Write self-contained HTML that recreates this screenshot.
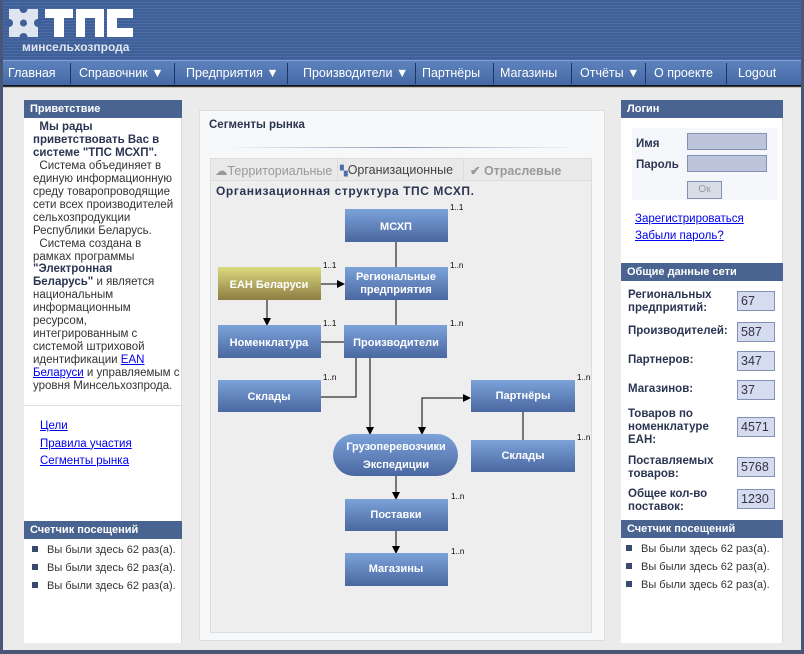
<!DOCTYPE html>
<html><head><meta charset="utf-8"><style>
*{margin:0;padding:0;box-sizing:border-box}
body{width:804px;height:654px;overflow:hidden;position:relative;background:#ebebeb;font-family:"Liberation Sans",sans-serif;font-size:11px;color:#333}
.a{position:absolute;white-space:nowrap}
#hdr{left:0;top:0;width:804px;height:60px;background:repeating-linear-gradient(#3f5f98 0 2px,#4d6ca5 2px 3px)}
#nav{left:0;top:60px;width:804px;height:25px;background:linear-gradient(#5d82bd,#4569a6);border-top:1px solid #7e9dd0;box-shadow:0 2px 1px #111}
#nav span{position:absolute;top:5px;color:#fff;font-size:12.5px}
.sep{position:absolute;top:2px;width:1px;height:21px;background:#1d3463}
.dd{font-size:9px}
.fr{background:#4a5675}
.col{background:#fff}
.hd{background:#4a6491;color:#fff;font-weight:bold;font-size:11px;padding:3px 6px;height:18px}
a{color:#0000ee}
.lbl{font-weight:bold;color:#2b3552;font-size:11.5px;line-height:13px}
.val{width:38px;height:20px;background:#d5dcef;border:1px solid #8392b4;color:#334;font-size:12.5px;padding:2px 0 0 3px}
.li{font-size:11px;color:#333}
.li:before{content:"";display:inline-block;width:6px;height:6px;background:#3a4a6e;margin:0 9px 1px 4px}
</style></head><body>
<div class="a" id="hdr"></div>
<svg class="a" style="left:0;top:0" width="140" height="60">
<rect x="9" y="9" width="29" height="28" fill="#dfe5ee"/>
<circle cx="23.5" cy="23" r="3.5" fill="#3f5f98"/>
<circle cx="9" cy="23" r="4" fill="#3f5f98"/><circle cx="38" cy="23" r="4" fill="#3f5f98"/>
<circle cx="23.5" cy="9" r="4" fill="#3f5f98"/><circle cx="23.5" cy="37" r="4" fill="#3f5f98"/>
<path d="M45 9h28v9h-9v19h-10v-19h-9z M76 9h28v28h-9v-19h-10v19h-9z M107 9h26v9h-16v10h16v9h-26z" fill="#fff"/>
</svg>
<div class="a" style="left:22px;top:40px;color:#dfe5ee;font-weight:bold;font-size:12px">минсельхозпрода</div>
<div class="a" id="nav">
<span style="left:8px">Главная</span><div class="sep" style="left:70px"></div>
<span style="left:79px">Справочник <span class="dd" style="position:static">▼</span></span><div class="sep" style="left:174px"></div>
<span style="left:186px">Предприятия <span class="dd" style="position:static">▼</span></span><div class="sep" style="left:287px"></div>
<span style="left:303px">Производители <span class="dd" style="position:static">▼</span></span><div class="sep" style="left:415px"></div>
<span style="left:422px">Партнёры</span><div class="sep" style="left:493px"></div>
<span style="left:500px">Магазины</span><div class="sep" style="left:571px"></div>
<span style="left:580px">Отчёты <span class="dd" style="position:static">▼</span></span><div class="sep" style="left:645px"></div>
<span style="left:654px">О проекте</span><div class="sep" style="left:726px"></div>
<span style="left:738px">Logout</span>
</div>
<div class="a fr" style="left:0;top:0;width:3px;height:654px"></div>
<div class="a fr" style="right:0;top:0;width:3px;height:654px"></div>
<div class="a fr" style="left:0;bottom:0;width:804px;height:4px"></div>

<div class="a col" style="left:24px;top:100px;width:158px;height:543px;border-right:1px solid #ddd"></div>
<div class="a hd" style="left:24px;top:100px;width:158px">Приветствие</div>
<div class="a" style="left:33px;top:121px;font-size:11.5px;line-height:12.95px;color:#333">
<b style="color:#2b3552">&nbsp;&nbsp;Мы рады<br>приветствовать Вас в<br>системе "ТПС МСХП".</b><br>
&nbsp;&nbsp;Система объединяет в<br>единую информационную<br>среду товаропроводящие<br>сети всех производителей<br>сельхозпродукции<br>Республики Беларусь.<br>
&nbsp;&nbsp;Система создана в<br>рамках программы<br><b style="color:#2b3552">"Электронная<br>Беларусь"</b> и является<br>национальным<br>информационным<br>ресурсом,<br>интегрированным с<br>системой штриховой<br>идентификации <a href="#">EAN</a><br><a href="#">Беларуси</a> и управляемым с<br>уровня Минсельхозпрода.</div>
<div class="a" style="left:24px;top:405px;width:158px;height:1px;background:#ddd"></div>
<div class="a" style="left:40px;top:418px;line-height:17.5px;font-size:11.5px"><a href="#">Цели</a><br><a href="#">Правила участия</a><br><a href="#">Сегменты рынка</a></div>
<div class="a hd" style="left:24px;top:521px;width:158px">Счетчик посещений</div>
<div class="a" style="left:28px;top:541px;line-height:18px"><div class="li">Вы были здесь 62 раз(а).</div><div class="li">Вы были здесь 62 раз(а).</div><div class="li">Вы были здесь 62 раз(а).</div></div>

<div class="a" style="left:199px;top:110px;width:406px;height:531px;background:#f7f8fa;border:1px solid #ddd"></div>
<div class="a" style="left:209px;top:119px;font-weight:bold;font-size:11.5px;color:#2b3552">Сегменты рынка</div>
<div class="a" style="left:225px;top:147px;width:355px;height:1px;background:linear-gradient(90deg,#f7f8fa,#8d9ab8,#f7f8fa)"></div>
<div class="a" style="left:210px;top:158px;width:382px;height:475px;background:#eeeeee;border:1px solid #ddd"></div>
<div class="a" style="left:211px;top:159px;width:380px;height:22px;background:#e9e9e9;border-bottom:1px solid #ddd"></div>
<div class="a" style="left:337px;top:159px;width:1px;height:22px;background:#ddd"></div>
<div class="a" style="left:463px;top:159px;width:1px;height:22px;background:#ddd"></div>
<div class="a" style="left:215px;top:163px;font-size:12.5px;color:#999">☁Территориальные</div>
<div class="a" style="left:340px;top:163px;font-size:12.5px;color:#444"><span style="color:#4a6fb0;font-size:10px">▚</span>Организационные</div>
<div class="a" style="left:470px;top:163px;font-size:12.5px;color:#999;font-weight:bold">✔ Отраслевые</div>
<div class="a" style="left:216px;top:184px;font-weight:bold;font-size:12px;color:#2b3552;letter-spacing:0.6px">Организационная структура ТПС МСХП.</div>

<svg class="a" style="left:0;top:0" width="804" height="654" font-family="Liberation Sans,sans-serif">
<defs>
<linearGradient id="b" x1="0" y1="0" x2="0" y2="1"><stop offset="0" stop-color="#7ca2da"/><stop offset="1" stop-color="#4a67a0"/></linearGradient>
<linearGradient id="o" x1="0" y1="0" x2="0" y2="1"><stop offset="0" stop-color="#dcda7e"/><stop offset="1" stop-color="#8d7d43"/></linearGradient>
<marker id="ar" markerWidth="8" markerHeight="8" refX="7" refY="4" orient="auto" markerUnits="userSpaceOnUse"><path d="M0 0L8 4L0 8z" fill="#000"/></marker>
</defs>
<g stroke="#000" stroke-width="1" fill="none">
<path d="M396 242V267"/>
<path d="M321 284H344" marker-end="url(#ar)"/>
<path d="M267 300V325" marker-end="url(#ar)"/>
<path d="M396 300V325"/>
<path d="M321 342H344"/>
<path d="M356 358V397H321"/>
<path d="M370 358V434" marker-end="url(#ar)"/>
<path d="M422 434V398H470" marker-end="url(#ar)"/>
<path d="M422 400V434" marker-end="url(#ar)"/>
<path d="M523 412V440"/>
<path d="M396 476V499" marker-end="url(#ar)"/>
<path d="M396 531V553" marker-end="url(#ar)"/>
</g>
<g>
<rect x="345" y="209" width="103" height="33" fill="url(#b)"/>
<rect x="218" y="267" width="103" height="33" fill="url(#o)"/>
<rect x="345" y="267" width="103" height="33" fill="url(#b)"/>
<rect x="218" y="325" width="103" height="33" fill="url(#b)"/>
<rect x="344" y="325" width="103" height="33" fill="url(#b)"/>
<rect x="218" y="380" width="103" height="32" fill="url(#b)"/>
<rect x="471" y="380" width="104" height="32" fill="url(#b)"/>
<rect x="333" y="434" width="125" height="42" rx="21" fill="url(#b)"/>
<rect x="471" y="440" width="104" height="32" fill="url(#b)"/>
<rect x="345" y="499" width="103" height="32" fill="url(#b)"/>
<rect x="345" y="553" width="103" height="33" fill="url(#b)"/>
</g>
<g fill="#fff" font-weight="bold" font-size="11" text-anchor="middle">
<text x="396" y="230">МСХП</text>
<text x="269" y="288">ЕАН Беларуси</text>
<text x="396" y="280">Региональные</text><text x="396" y="293">предприятия</text>
<text x="269" y="346">Номенклатура</text>
<text x="396" y="346">Производители</text>
<text x="269" y="400">Склады</text>
<text x="523" y="399">Партнёры</text>
<text x="396" y="450">Грузоперевозчики</text><text x="396" y="468">Экспедиции</text>
<text x="523" y="459">Склады</text>
<text x="396" y="518">Поставки</text>
<text x="396" y="572">Магазины</text>
</g>
<g fill="#000" font-size="8">
<text x="450" y="210">1..1</text><text x="323" y="268">1..1</text><text x="450" y="326">1..n</text>
<text x="323" y="326">1..1</text><text x="450" y="268">1..n</text><text x="323" y="380">1..n</text>
<text x="577" y="380">1..n</text><text x="577" y="440">1..n</text><text x="451" y="499">1..n</text><text x="451" y="554">1..n</text>
</g>
</svg>

<div class="a col" style="left:621px;top:100px;width:162px;height:543px;border-right:1px solid #ddd"></div>
<div class="a hd" style="left:621px;top:100px;width:162px">Логин</div>
<div class="a" style="left:632px;top:128px;width:145px;height:72px;background:#f6f7fa"></div>
<div class="a lbl" style="left:636px;top:138px">Имя</div>
<div class="a lbl" style="left:636px;top:159px">Пароль</div>
<div class="a" style="left:687px;top:133px;width:80px;height:17px;background:#bcc5dc;border:1px solid #8392b4"></div>
<div class="a" style="left:687px;top:155px;width:80px;height:17px;background:#bcc5dc;border:1px solid #8392b4"></div>
<div class="a" style="left:687px;top:181px;width:35px;height:18px;background:#d8dde8;border:1px solid #8392b4;color:#999;text-align:center;font-size:10px;line-height:16px">Ок</div>
<div class="a" style="left:635px;top:211px;line-height:17px;font-size:11.5px"><a href="#">Зарегистрироваться</a><br><a href="#">Забыли пароль?</a></div>
<div class="a hd" style="left:621px;top:263px;width:162px">Общие данные сети</div>
<div class="a lbl" style="left:628px;top:289px">Региональных<br>предприятий:</div><div class="a val" style="left:737px;top:291px">67</div>
<div class="a lbl" style="left:628px;top:325px">Производителей:</div><div class="a val" style="left:737px;top:322px">587</div>
<div class="a lbl" style="left:628px;top:354px">Партнеров:</div><div class="a val" style="left:737px;top:351px">347</div>
<div class="a lbl" style="left:628px;top:383px">Магазинов:</div><div class="a val" style="left:737px;top:380px">37</div>
<div class="a lbl" style="left:628px;top:408px">Товаров по<br>номенклатуре<br>ЕАН:</div><div class="a val" style="left:737px;top:417px">4571</div>
<div class="a lbl" style="left:628px;top:455px">Поставляемых<br>товаров:</div><div class="a val" style="left:737px;top:457px">5768</div>
<div class="a lbl" style="left:628px;top:488px">Общее кол-во<br>поставок:</div><div class="a val" style="left:737px;top:489px">1230</div>
<div class="a hd" style="left:621px;top:520px;width:162px">Счетчик посещений</div>
<div class="a" style="left:622px;top:540px;line-height:18px"><div class="li">Вы были здесь 62 раз(а).</div><div class="li">Вы были здесь 62 раз(а).</div><div class="li">Вы были здесь 62 раз(а).</div></div>
</body></html>
